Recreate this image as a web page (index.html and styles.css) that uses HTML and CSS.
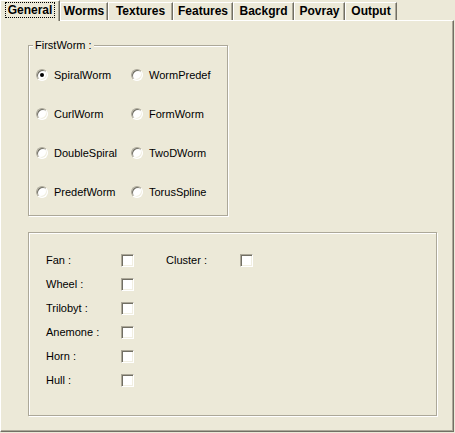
FILE: index.html
```html
<!DOCTYPE html>
<html>
<head>
<meta charset="utf-8">
<link rel="stylesheet" href="styles.css">
</head>
<body>
<div class="tabs">
  <div class="tab active"><span class="focus">General</span></div>
  <div class="tab t-worms">Worms</div>
  <div class="tab t-textures">Textures</div>
  <div class="tab t-features">Features</div>
  <div class="tab t-backgrd">Backgrd</div>
  <div class="tab t-povray">Povray</div>
  <div class="tab t-output">Output</div>
</div>
<div class="panel">
  <div class="group g1">
    <span class="legend">FirstWorm :</span>
    <div class="radios">
      <label class="radio"><span class="rb checked"></span>SpiralWorm</label>
      <label class="radio"><span class="rb"></span>WormPredef</label>
      <label class="radio"><span class="rb"></span>CurlWorm</label>
      <label class="radio"><span class="rb"></span>FormWorm</label>
      <label class="radio"><span class="rb"></span>DoubleSpiral</label>
      <label class="radio"><span class="rb"></span>TwoDWorm</label>
      <label class="radio"><span class="rb"></span>PredefWorm</label>
      <label class="radio"><span class="rb"></span>TorusSpline</label>
    </div>
  </div>
  <div class="group g2">
    <div class="checks">
      <span class="lbl">Fan :</span><span class="cb"></span>
      <span class="lbl2">Cluster :</span><span class="cb cb2"></span>
      <span class="lbl">Wheel :</span><span class="cb"></span>
      <span class="lbl">Trilobyt :</span><span class="cb"></span>
      <span class="lbl">Anemone :</span><span class="cb"></span>
      <span class="lbl">Horn :</span><span class="cb"></span>
      <span class="lbl">Hull :</span><span class="cb"></span>
    </div>
  </div>
</div>
</body>
</html>
```
FILE: styles.css
```css
html, body {
  margin: 0;
  padding: 0;
}
body {
  background: #ECE9D8;
  font-family: "Liberation Sans", Arial, sans-serif;
  font-size: 11px;
  color: #000;
  width: 455px;
  height: 433px;
  overflow: hidden;
}
.tabs {
  display: flex;
  align-items: flex-end;
  height: 20px;
}
.tab {
  box-sizing: border-box;
  height: 18px;
  padding: 0;
  border-top: 1px solid #fff;
  border-left: 1px solid #fff;
  border-right: 1px solid #716F64;
  box-shadow: inset -1px 0 0 #ACA899;
  font-weight: bold;
  font-size: 12px;
  line-height: 16px;
  text-align: center;
  white-space: nowrap;
}
.t-worms { width: 48px; }
.t-textures { width: 65px; }
.t-features { width: 60px; }
.t-backgrd { width: 61px; }
.t-povray { width: 51px; }
.t-output { width: 52px; }
.tab.active {
  width: 60px;
  height: 21px;
  margin-bottom: -1px;
  position: relative;
  z-index: 1;
  background: #ECE9D8;
  line-height: 18px;
}
.focus {
  outline: 1px dotted #000;
  padding: 0 2px;
}
.panel {
  box-sizing: border-box;
  width: 454px;
  height: 412px;
  border-top: 1px solid #fff;
  border-left: 1px solid #fff;
  border-right: 1px solid #716F64;
  border-bottom: 1px solid #716F64;
  box-shadow: inset -1px -1px 0 #ACA899;
  padding: 24px 0 0 27px;
}
.group {
  box-sizing: border-box;
  position: relative;
  border: 1px solid #ACA899;
  box-shadow: inset 1px 1px 0 #fff, 1px 1px 0 #fff;
}
.g1 {
  width: 200px;
  height: 171px;
  padding: 9px 0 0 7px;
}
.legend {
  position: absolute;
  top: -7px;
  left: 4px;
  padding: 0 2px;
  background: #ECE9D8;
  line-height: 13px;
}
.radios {
  display: grid;
  grid-template-columns: 95px auto;
  grid-auto-rows: 39px;
  align-items: center;
}
.radio {
  display: flex;
  align-items: center;
  gap: 6px;
}
.rb {
  box-sizing: border-box;
  width: 12px;
  height: 12px;
  border-radius: 50%;
  background: #fff;
  border: 1px solid;
  border-color: #ACA899 #fff #fff #ACA899;
  box-shadow: inset 1px 1px 0 #716F64, inset -1px -1px 0 #F1EFE2;
  position: relative;
}
.rb.checked::after {
  content: "";
  position: absolute;
  left: 3px;
  top: 3px;
  width: 4px;
  height: 4px;
  border-radius: 50%;
  background: #000;
}
.g2 {
  margin-top: 16px;
  width: 409px;
  height: 184px;
  padding: 15px 0 0 17px;
}
.checks {
  display: grid;
  grid-template-columns: 75px 13px 32px 74px 13px;
  grid-auto-rows: 24px;
  align-items: center;
}
.lbl { grid-column: 1; }
.cb { grid-column: 2; }
.lbl2 { grid-column: 4; }
.cb2 { grid-column: 5; }
.cb {
  box-sizing: border-box;
  width: 13px;
  height: 13px;
  background: #fff;
  border: 1px solid;
  border-color: #ACA899 #fff #fff #ACA899;
  box-shadow: inset 1px 1px 0 #716F64, inset -1px -1px 0 #F1EFE2;
}
```
